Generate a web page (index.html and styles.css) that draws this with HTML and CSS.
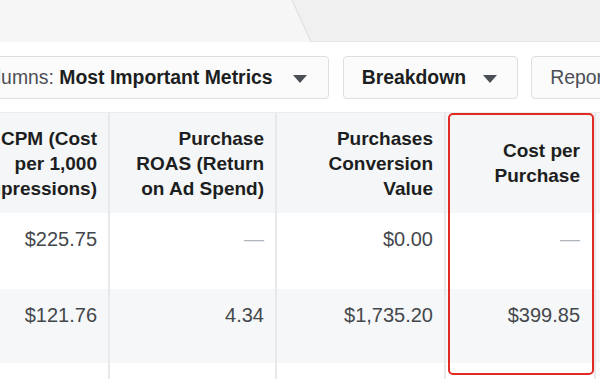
FILE: index.html
```html
<!DOCTYPE html>
<html>
<head>
<meta charset="utf-8">
<link rel="stylesheet" href="styles.css">
</head>
<body>
<div class="page">
  <div class="topbar">
    <svg class="tabs" width="600" height="42" viewBox="0 0 600 42">
      <path d="M0 0 H292 L311 42 H0 Z" fill="#f6f6f6"/>
      <path d="M292 0 L311 42" stroke="#dcdcdc" stroke-width="1" fill="none"/>
    </svg>
  </div>
  <div class="toolbar">
    <div class="btn btn-columns"><span class="label">Columns: </span><b>Most Important Metrics</b><span class="caret wide"></span></div>
    <div class="btn"><b>Breakdown</b><span class="caret"></span></div>
    <div class="btn btn-report"><span class="label">Reports</span></div>
  </div>
  <div class="table-wrap">
    <div class="table">
      <div class="cell head">CPM (Cost per 1,000 Impressions)</div>
      <div class="cell head">Purchase ROAS (Return on Ad Spend)</div>
      <div class="cell head">Purchases Conversion Value</div>
      <div class="cell head narrow">Cost per Purchase</div>
      <div class="cell head last"></div>

      <div class="cell">$225.75</div>
      <div class="cell dash">—</div>
      <div class="cell">$0.00</div>
      <div class="cell dash narrow">—</div>
      <div class="cell last"></div>

      <div class="cell alt">$121.76</div>
      <div class="cell alt">4.34</div>
      <div class="cell alt">$1,735.20</div>
      <div class="cell alt narrow">$399.85</div>
      <div class="cell alt last"></div>

      <div class="cell"></div>
      <div class="cell"></div>
      <div class="cell"></div>
      <div class="cell"></div>
      <div class="cell last"></div>
    </div>
    <div class="highlight"></div>
  </div>
</div>
</body>
</html>
```
FILE: styles.css
```css
html, body {
  margin: 0;
  padding: 0;
  background: #ffffff;
}
body {
  width: 600px;
  height: 379px;
  overflow: hidden;
  font-family: "Liberation Sans", Arial, sans-serif;
  color: #1c1e21;
}
.page {
  width: 600px;
  height: 379px;
  overflow: hidden;
  position: relative;
}
.topbar {
  height: 42px;
  background: #f0f0f0;
  border-bottom: 1px solid #e6e6e6;
  box-sizing: border-box;
}
.tabs {
  display: block;
}
.toolbar {
  display: flex;
  gap: 14px;
  margin-left: -47px;
  padding-top: 14px;
  height: 43px;
  box-sizing: content-box;
}
.btn {
  display: flex;
  align-items: center;
  height: 43px;
  box-sizing: border-box;
  border: 1px solid #dddfe2;
  border-radius: 4px;
  background: #fbfbfb;
  padding: 0 20px 0 18px;
  font-size: 19.4px;
  white-space: nowrap;
  flex: none;
}
.btn-columns {
  padding-right: 21px;
}
.btn b {
  font-weight: bold;
  color: #1c1e21;
}
.btn .label {
  color: #4b4f56;
  white-space: pre;
}
.caret {
  width: 0;
  height: 0;
  border-left: 7px solid transparent;
  border-right: 7px solid transparent;
  border-top: 8px solid #4b4f56;
  margin-left: 17px;
  margin-top: 2px;
}
.caret.wide {
  margin-left: 20px;
}
.btn-report {
  width: 120px;
  margin-left: -1px;
}
.table-wrap {
  position: relative;
  margin-top: 13px;
}
.table {
  display: grid;
  grid-template-columns: 170px 167px 169px 150px 100px;
  grid-template-rows: 100px 76px 74px 40px;
  margin-left: -60px;
  border-top: 1px solid #ececec;
}
.cell {
  border-right: 2px solid #e8e9ea;
  padding: 15px 11px 0 0;
  text-align: right;
  font-size: 20px;
  line-height: 22px;
  color: #44474c;
  white-space: nowrap;
}
.cell.narrow {
  padding-right: 14px;
}
.cell.last {
  border-right: none;
}
.head {
  background: #f5f6f7;
  display: flex;
  align-items: center;
  justify-content: flex-end;
  padding: 0 11px 0 25px;
  font-weight: bold;
  font-size: 19px;
  line-height: 25px;
  color: #1c1e21;
  white-space: normal;
  overflow: hidden;
}
.head.narrow {
  padding-right: 14px;
}
.head:first-child {
  padding-left: 30px;
}
.dash {
  color: #b0b5bb;
}
.alt {
  background: #f6f7f8;
}
.highlight {
  position: absolute;
  left: 448px;
  top: 1px;
  width: 146px;
  height: 262px;
  box-sizing: border-box;
  border: 2px solid #e02a22;
  border-radius: 5px;
}
```
